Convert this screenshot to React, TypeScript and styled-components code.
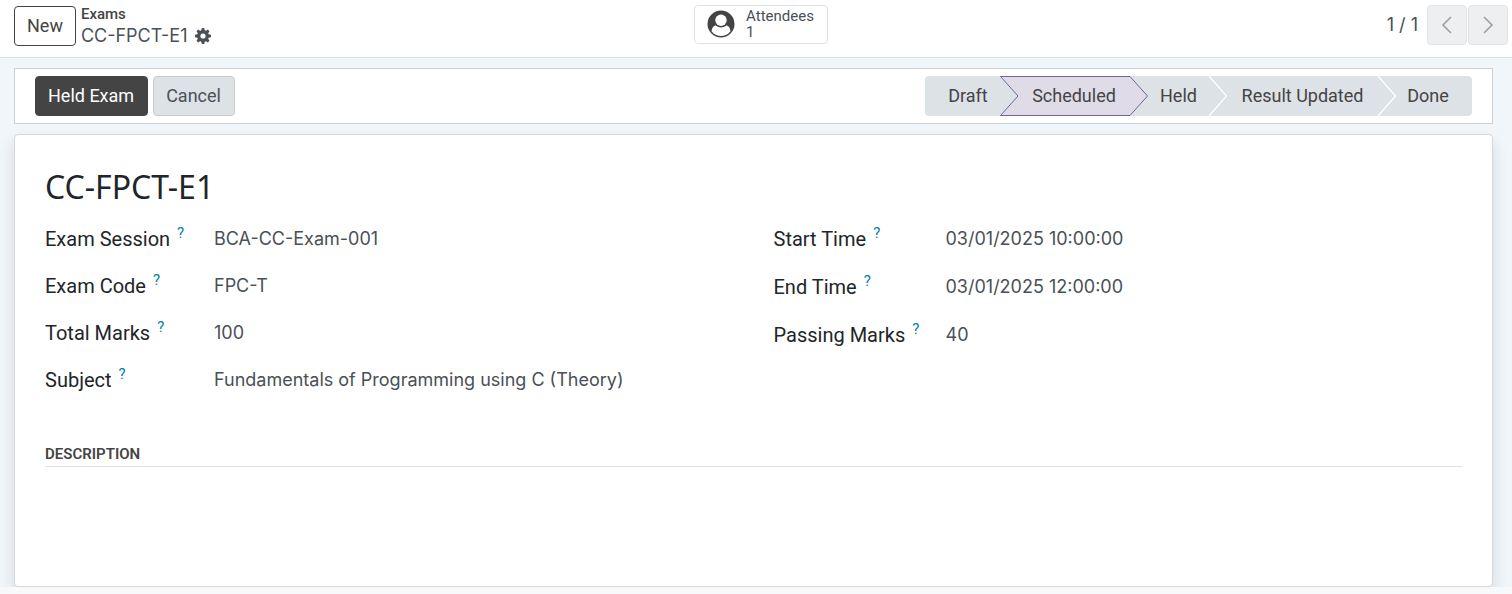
import React from "react";
import styled, { createGlobalStyle } from "styled-components";

const GlobalStyle = createGlobalStyle`
  *, *::before, *::after { box-sizing: border-box; }
  body {
    margin: 0;
    background: #f8f9fb;
    color: #444444;
    font-family: Roboto, "Liberation Sans", sans-serif;
    font-size: 18px;
    line-height: 24px;
  }
  button, a { font: inherit; color: inherit; }
`;

const ControlPanel = styled.header`
  display: grid;
  grid-template-columns: 1fr auto 1fr;
  align-items: start;
  padding: 5px 4px 9px 14px;
  background: #ffffff;
  border-bottom: 1px solid #dbe2e8;
`;

const Lead = styled.div`
  display: flex;
  gap: 5px;
`;

type Tone = "outline" | "primary" | "secondary";

const tones: Record<Tone, string> = {
  outline: "background: #ffffff; border-color: #444444; color: #444444;",
  primary: "background: #444444; border-color: #444444; color: #ffffff;",
  secondary: "background: #dde2e6; border-color: #c9cccf; color: #4c5156;",
};

const Button = styled.button<{ $tone: Tone }>`
  height: 40px;
  padding: 0 13px 0 12px;
  border: 1px solid;
  border-radius: 4px;
  cursor: pointer;
  ${(p) => tones[p.$tone]}
`;

const NewButton = styled(Button)`
  margin-top: 1px;
  padding: 0 12px;
`;

const Breadcrumb = styled.nav`
  display: flex;
  flex-direction: column;
  gap: 1px;
`;

const ParentLink = styled.a`
  font-size: 15px;
  font-weight: 500;
  line-height: 18px;
  text-decoration: none;
`;

const Current = styled.div`
  display: flex;
  align-items: center;
  gap: 8px;
  font-family: Inter, "Liberation Sans", sans-serif;
  color: #495057;
`;

const IconButton = styled.button`
  display: flex;
  padding: 0;
  border: 0;
  background: none;
  cursor: pointer;
`;

const StatButton = styled.button`
  display: flex;
  align-items: center;
  gap: 11px;
  height: 39px;
  padding: 0 13px 2px 12px;
  border: 1px solid #dee2e6;
  border-radius: 4px;
  background: #ffffff;
  text-align: left;
  cursor: pointer;
`;

const StatText = styled.span`
  display: flex;
  flex-direction: column;
  font-size: 15px;
  line-height: 16px;
  color: #495057;
`;

const Pager = styled.div`
  display: flex;
  align-items: center;
  justify-self: end;
  gap: 1px;
`;

const PagerCount = styled.span`
  margin-right: 8px;
  font-family: Inter, "Liberation Sans", sans-serif;
  color: #495057;
`;

const PagerButton = styled.button`
  display: flex;
  align-items: center;
  justify-content: center;
  width: 40px;
  height: 40px;
  padding: 0;
  border: 1px solid #e2e4e6;
  border-radius: 4px;
  background: #eeeff1;
`;

const Content = styled.main`
  display: flex;
  flex-direction: column;
  gap: 10px;
  padding: 10px 19px 0 14px;
  background: #f1f6fb;
  overflow: hidden;
`;

const StatusBar = styled.div`
  display: flex;
  justify-content: space-between;
  padding: 7px 20px;
  border: 1px solid #c9d1d9;
  background: #ffffff;
`;

const Actions = styled.div`
  display: flex;
  gap: 5px;
`;

const Steps = styled.ol`
  display: flex;
  margin: 0;
  padding: 0;
  list-style: none;
  border-radius: 4px;
  background: #dde2e6;
  overflow: hidden;
`;

const Step = styled.li<{ $width: number }>`
  position: relative;
  flex: 0 0 ${(p) => p.$width}px;
`;

type Place = "first" | "middle" | "last";

const stepPadding: Record<Place, string> = {
  first: "0 0 0 11px",
  middle: "0 0 0 18px",
  last: "0 12px 0 18px",
};

const StepButton = styled.button<{ $place: Place }>`
  position: relative;
  width: 100%;
  height: 40px;
  padding: ${(p) => stepPadding[p.$place]};
  border: 0;
  background: none;
  white-space: nowrap;
`;

const StepShape = styled.svg`
  position: absolute;
  top: 0;
  left: 0;
  overflow: visible;
`;

const Sheet = styled.section`
  padding: 30px 30px 0;
  border: 1px solid #d5d7da;
  border-radius: 4px;
  background: #ffffff;
  box-shadow: 0 8px 16px rgba(0, 0, 0, 0.12);
`;

const Title = styled.h1`
  margin: 0;
  color: #212529;
  font-family: "Noto Sans", "Open Sans", sans-serif;
  font-size: 32px;
  font-weight: 400;
  line-height: 44px;
`;

const Groups = styled.div`
  display: grid;
  grid-template-columns: 1fr 1fr;
  gap: 40px;
  margin-top: 14px;
`;

const Group = styled.dl<{ $label: number; $gap: number }>`
  display: grid;
  grid-template-columns: ${(p) => p.$label}px 1fr;
  grid-auto-rows: 32px;
  align-content: start;
  align-items: center;
  row-gap: ${(p) => p.$gap}px;
  margin: 0;
`;

const Label = styled.dt`
  display: flex;
  gap: 7px;
  color: #212529;
  font-size: 20px;
  white-space: nowrap;
`;

const Help = styled.sup`
  color: #0180a5;
  font-size: 15px;
  line-height: 12px;
`;

const Value = styled.dd`
  margin: 0;
  color: #495057;
  font-family: Inter, "Liberation Sans", sans-serif;
`;

const SectionTitle = styled.h2`
  margin: 48px 0 0;
  padding-bottom: 2px;
  border-bottom: 1px solid #dee2e6;
  font-size: 15px;
  font-weight: 600;
  line-height: 20px;
  text-transform: uppercase;
`;

const Description = styled.div`
  min-height: 119px;
`;

const Gear = () => (
  <svg width="16" height="16" viewBox="0 0 16 16" fill="#495057" aria-hidden="true">
    {[0, 45, 90, 135].map((a) => (
      <path key={a} d="M6.3 2.6 6.8 0h2.4l.5 2.6v10.8L9.2 16H6.8l-.5-2.6z" transform={`rotate(${a} 8 8)`} />
    ))}
    <circle cx="8" cy="8" r="5.9" />
    <circle cx="8" cy="8" r="2.6" fill="#fff" />
  </svg>
);

const Person = () => (
  <svg width="28" height="28" viewBox="0 0 28 28" aria-hidden="true">
    <circle cx="14" cy="14" r="13.5" fill="#444" />
    <path d="M4.500 21.300C5 17.500 7 15.300 9.500 15.300h9c2.500 0 4.500 2.200 5 6A12 12 0 0 1 4.500 21.300z" fill="#fff" />
    <circle cx="14" cy="10.300" r="7.300" fill="#444" />
    <circle cx="14" cy="10.300" r="5.700" fill="#fff" />
  </svg>
);

const Chevron = ({ d }: { d: string }) => (
  <svg width="12" height="18" viewBox="0 0 12 18" fill="none" stroke="#9d9fa1" strokeWidth="1.6" aria-hidden="true">
    <path d={d} />
  </svg>
);

const steps: { name: string; width: number; place: Place; active?: boolean }[] = [
  { name: "Draft", width: 75, place: "first" },
  { name: "Scheduled", width: 130, place: "middle", active: true },
  { name: "Held", width: 79, place: "middle" },
  { name: "Result Updated", width: 169, place: "middle" },
  { name: "Done", width: 94, place: "last" },
];

const leftFields = [
  ["Exam Session", "BCA-CC-Exam-001"],
  ["Exam Code", "FPC-T"],
  ["Total Marks", "100"],
  ["Subject", "Fundamentals of Programming using C (Theory)"],
];

const rightFields = [
  ["Start Time", "03/01/2025 10:00:00"],
  ["End Time", "03/01/2025 12:00:00"],
  ["Passing Marks", "40"],
];

const Fields = ({ rows, label, gap }: { rows: string[][]; label: number; gap: number }) => (
  <Group $label={label} $gap={gap}>
    {rows.map(([name, value]) => (
      <React.Fragment key={name}>
        <Label>
          {name}
          <Help>?</Help>
        </Label>
        <Value>{value}</Value>
      </React.Fragment>
    ))}
  </Group>
);

export default function App() {
  return (
    <>
      <GlobalStyle />
      <ControlPanel>
        <Lead>
          <NewButton $tone="outline">New</NewButton>
          <Breadcrumb>
            <ParentLink href="#exams">Exams</ParentLink>
            <Current>
              CC-FPCT-E1
              <IconButton aria-label="Actions">
                <Gear />
              </IconButton>
            </Current>
          </Breadcrumb>
        </Lead>
        <StatButton>
          <Person />
          <StatText>
            <span>Attendees</span>
            <span>1</span>
          </StatText>
        </StatButton>
        <Pager>
          <PagerCount>1 / 1</PagerCount>
          <PagerButton aria-label="Previous">
            <Chevron d="M10 1 2 9l8 8" />
          </PagerButton>
          <PagerButton aria-label="Next">
            <Chevron d="M2 1l8 8-8 8" />
          </PagerButton>
        </Pager>
      </ControlPanel>
      <Content>
        <StatusBar>
          <Actions>
            <Button $tone="primary">Held Exam</Button>
            <Button $tone="secondary">Cancel</Button>
          </Actions>
          <Steps>
            {steps.map((s, i) => (
              <Step key={s.name} $width={s.width}>
                {s.active ? (
                  <StepShape width={s.width} height="40" aria-hidden="true">
                    <path
                      d={`M.5.5H${s.width}l17.500 19.500L${s.width} 39.500H.5L18 20z`}
                      fill="#dfdce8"
                      stroke="#71639e"
                    />
                  </StepShape>
                ) : (
                  i > 2 && (
                    <StepShape width="18" height="40" aria-hidden="true">
                      <path d="M0 0l17.500 20L0 40" fill="none" stroke="#fff" strokeWidth="1.300" />
                    </StepShape>
                  )
                )}
                <StepButton $place={s.place} aria-current={s.active ? "step" : undefined}>
                  {s.name}
                </StepButton>
              </Step>
            ))}
          </Steps>
        </StatusBar>
        <Sheet>
          <Title>CC-FPCT-E1</Title>
          <Groups>
            <Fields rows={leftFields} label={169} gap={15} />
            <Fields rows={rightFields} label={172} gap={16} />
          </Groups>
          <SectionTitle>Description</SectionTitle>
          <Description />
        </Sheet>
      </Content>
    </>
  );
}
